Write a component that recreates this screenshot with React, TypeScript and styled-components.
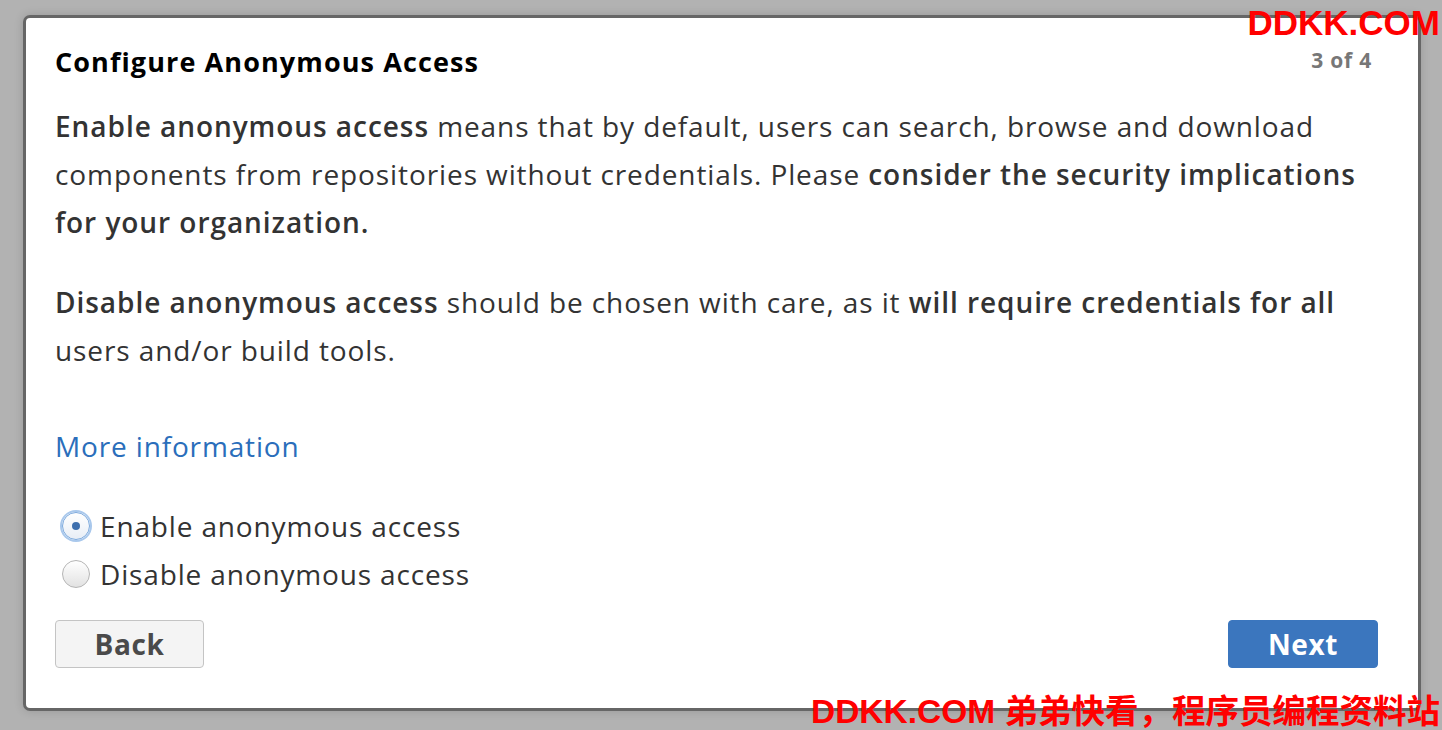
import styled, { createGlobalStyle } from "styled-components";

const Global = createGlobalStyle`
  html, body {
    margin: 0;
    padding: 0;
    background: #b2b2b2;
    font-family: "Open Sans", Lato, "Liberation Sans", sans-serif;
  }
`;

const Page = styled.div`
  position: relative;
  width: 1442px;
  height: 730px;
  padding: 15px 0 0 23px;
  box-sizing: border-box;
  overflow: hidden;
`;

const Dialog = styled.div`
  width: 1398px;
  height: 696px;
  box-sizing: border-box;
  border: 3px solid #666;
  border-radius: 7px;
  background: #fff;
  box-shadow: 0 0 10px rgba(0, 0, 0, 0.15);
  padding: 24px 40px 0 29px;
  display: flex;
  flex-direction: column;
`;

const Header = styled.div`
  display: flex;
  justify-content: space-between;
  align-items: flex-start;
  height: 60px;
`;

const Title = styled.h2`
  margin: 0;
  font-size: 27px;
  font-weight: 700;
  color: #000;
  line-height: 40px;
  letter-spacing: 1.1px;
`;

const Step = styled.span`
  font-size: 21px;
  font-weight: 700;
  color: #777;
  line-height: 30px;
  margin: 3px 6px 0 0;
  letter-spacing: 0.8px;
`;

const Para = styled.p`
  margin: 0 0 32px;
  font-size: 28px;
  line-height: 48px;
  letter-spacing: 0.9px;
  color: #333;

  b {
    font-weight: 600;
    letter-spacing: 0.95px;
  }
`;

const MoreLink = styled.a`
  display: block;
  margin-top: 16px;
  font-size: 28px;
  line-height: 48px;
  letter-spacing: 0.85px;
  color: #2a6ebb;
  text-decoration: none;
`;

const Options = styled.div`
  display: flex;
  flex-direction: column;
  margin-top: 32px;
  padding-left: 7px;
`;

const OptionRow = styled.label`
  display: flex;
  align-items: center;
  gap: 10px;
  font-size: 28px;
  line-height: 48px;
  letter-spacing: 0.85px;
  color: #333;
`;

const RadioDot = styled.span<{ $checked?: boolean }>`
  width: 28px;
  height: 28px;
  border-radius: 50%;
  box-sizing: border-box;
  display: flex;
  align-items: center;
  justify-content: center;
  border: 1px solid ${(p) => (p.$checked ? "#7aa8dc" : "#b5b5b5")};
  background: ${(p) =>
    p.$checked
      ? "linear-gradient(#ffffff, #e8eef6)"
      : "linear-gradient(#ffffff, #e2e2e2)"};
  box-shadow: ${(p) => (p.$checked ? "0 0 0 2px #a9c8ec" : "none")};

  &::after {
    content: "";
    width: 8px;
    height: 8px;
    border-radius: 50%;
    background: #3d6fae;
    display: ${(p) => (p.$checked ? "block" : "none")};
  }
`;

const Footer = styled.div`
  display: flex;
  justify-content: space-between;
  margin-top: 22px;
`;

const Button = styled.button<{ $primary?: boolean }>`
  height: 48px;
  width: ${(p) => (p.$primary ? "150px" : "149px")};
  border-radius: 4px;
  font-family: inherit;
  font-size: 28px;
  font-weight: 700;
  letter-spacing: 0.6px;
  cursor: pointer;
  padding: 0;
  border: 1px solid ${(p) => (p.$primary ? "#3b76be" : "#c4c4c4")};
  background: ${(p) => (p.$primary ? "#3b76be" : "#f4f4f4")};
  color: ${(p) => (p.$primary ? "#fff" : "#4a4a4a")};
`;

const Watermark = styled.div<{ $top?: boolean }>`
  position: absolute;
  right: 2px;
  ${(p) => (p.$top ? "top: 2px;" : "bottom: 0;")}
  color: #ff0000;
  font-family: "Liberation Sans", "Noto Sans CJK SC", sans-serif;
  font-weight: 700;
  font-size: ${(p) => (p.$top ? "35px" : "33.5px")};
  line-height: ${(p) => (p.$top ? "42px" : "36px")};
  white-space: nowrap;
`;

export default function App() {
  return (
    <>
      <Global />
      <Page>
        <Dialog>
          <Header>
            <Title>Configure Anonymous Access</Title>
            <Step>3 of 4</Step>
          </Header>
          <Para>
            <b>Enable anonymous access</b> means that by default, users can
            search, browse and download
            <br />
            components from repositories without credentials. Please{" "}
            <b>consider the security implications</b>
            <br />
            <b>for your organization.</b>
          </Para>
          <Para>
            <b>Disable anonymous access</b> should be chosen with care, as it{" "}
            <b>will require credentials for all</b>
            <br />
            users and/or build tools.
          </Para>
          <MoreLink href="#">More information</MoreLink>
          <Options>
            <OptionRow>
              <RadioDot $checked />
              Enable anonymous access
            </OptionRow>
            <OptionRow>
              <RadioDot />
              Disable anonymous access
            </OptionRow>
          </Options>
          <Footer>
            <Button>Back</Button>
            <Button $primary>Next</Button>
          </Footer>
        </Dialog>
        <Watermark $top>DDKK.COM</Watermark>
        <Watermark>DDKK.COM 弟弟快看，程序员编程资料站</Watermark>
      </Page>
    </>
  );
}
